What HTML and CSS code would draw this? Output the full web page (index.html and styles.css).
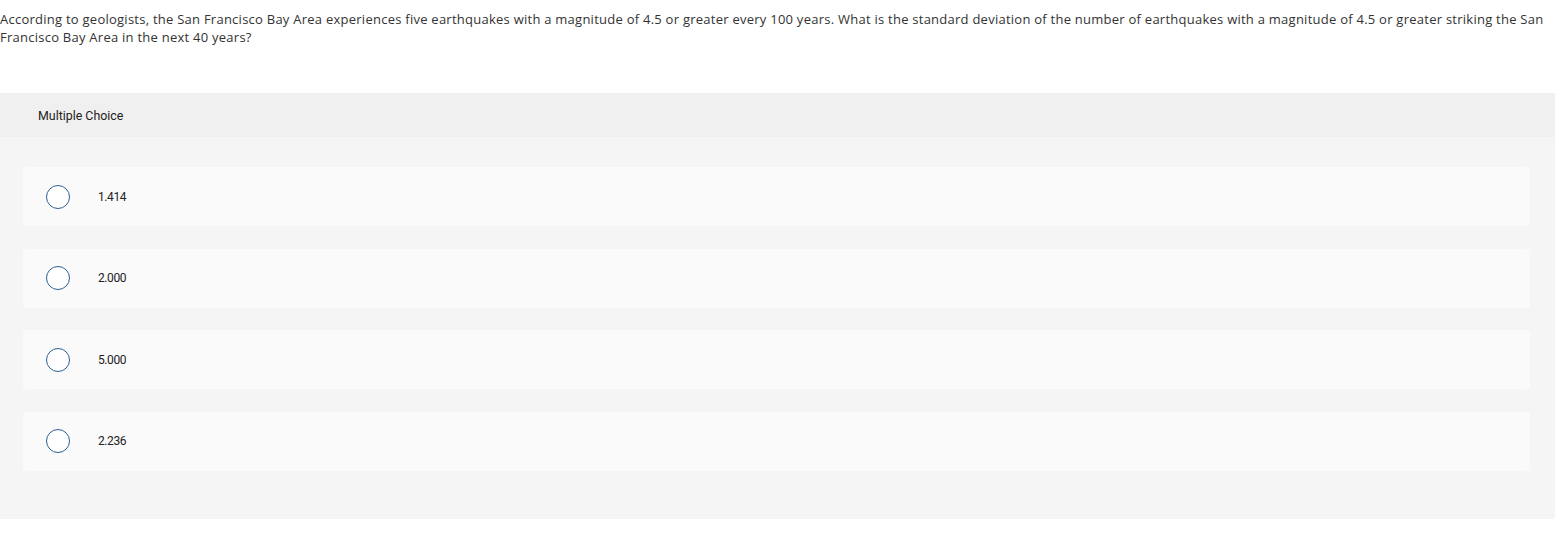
FILE: index.html
```html
<!DOCTYPE html>
<html>
<head>
<meta charset="utf-8">
<link rel="stylesheet" href="styles.css">
</head>
<body>
<p class="question">According to geologists, the San Francisco Bay Area experiences five earthquakes with a magnitude of 4.5 or greater every 100 years. What is the standard deviation of the number of earthquakes with a magnitude of 4.5 or greater striking the San Francisco Bay Area in the next 40 years?</p>
<div class="mc">
  <div class="mc-head">Multiple Choice</div>
  <div class="mc-body">
    <div class="opt"><span class="radio"></span><span class="label">1.414</span></div>
    <div class="opt"><span class="radio"></span><span class="label">2.000</span></div>
    <div class="opt"><span class="radio"></span><span class="label">5.000</span></div>
    <div class="opt"><span class="radio"></span><span class="label">2.236</span></div>
  </div>
</div>
</body>
</html>
```
FILE: styles.css
```css
html, body { margin: 0; padding: 0; background: #fff; }
body { font-family: Roboto, "Open Sans", Arial, sans-serif; color: #333; }
.question {
  margin: 0;
  padding: 10px 0 0 0;
  width: 1556px;
  font-family: "Open Sans", Roboto, sans-serif;
  font-size: 13px;
  letter-spacing: 0.25px;
  line-height: 18px;
  color: #333;
}
.mc {
  margin-top: 47px;
  width: 1555px;
  background: #f5f5f5;
  border-radius: 0 0 3px 0;
  padding-bottom: 48px;
}
.mc-head {
  background: #f0f0f0;
  height: 44px;
  display: flex;
  align-items: center;
  padding-left: 38px;
  font-size: 12.4px;
  color: #222;
}
.mc-body {
  padding: 30px 25px 0 23px;
  display: flex;
  flex-direction: column;
  gap: 22.5px;
}
.opt {
  background: #fafafa;
  height: 59px;
  border-radius: 3px;
  display: flex;
  align-items: center;
  padding-left: 23px;
}
.radio {
  width: 22px;
  height: 22px;
  border: 1.5px solid #2c5f91;
  border-radius: 50%;
  background: #fff;
  flex: none;
}
.label {
  margin-left: 28px;
  font-size: 12px;
  letter-spacing: -0.4px;
  color: #222;
}
```
